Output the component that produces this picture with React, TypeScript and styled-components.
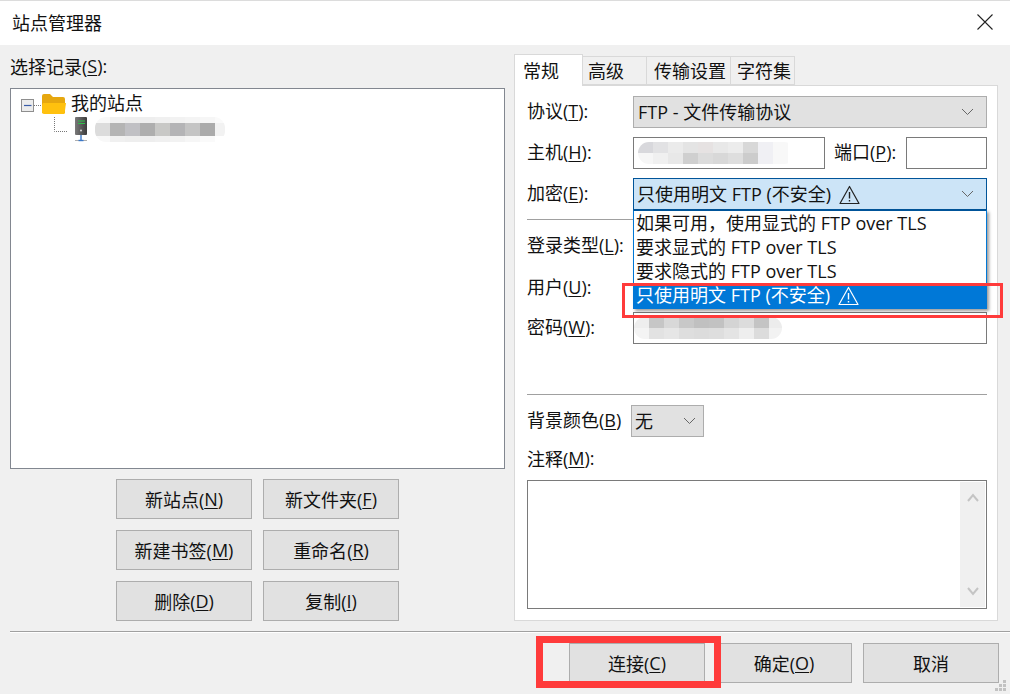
import React from "react";
import styled, { createGlobalStyle } from "styled-components";

const GlobalStyle = createGlobalStyle`
  html, body {
    margin: 0;
    padding: 0;
    background: #f0f0f0;
  }
  * {
    box-sizing: border-box;
  }
`;

const Chevron = ({ size = 13 }: { size?: number }) => (
  <svg width={size} height={8} viewBox="0 0 13 8" fill="none">
    <path d="M1 1l5.5 5.5L12 1" stroke="#666" strokeWidth="1" />
  </svg>
);

const Warn = ({ color }: { color: string }) => (
  <WarnIcon width="21" height="20" viewBox="0 0 21 20" fill="none">
    <path d="M10.5 1.5L20 18.5H1z" stroke={color} strokeWidth="1.2" strokeLinejoin="round" />
    <path d="M10.5 7v6.5M10.5 15v1.6" stroke={color} strokeWidth="1.4" />
  </WarnIcon>
);

type SmudgeProps = { rows: string[][]; cell: number; width: number; height: number };

// the blurred out host names in the picture
const Smudge = ({ rows, cell, width, height }: SmudgeProps) => (
  <SmudgeBox $width={width} $height={height}>
    {rows.map((row, i) => (
      <SmudgeRow key={i}>
        {row.map((c, j) => (
          <SmudgeCell key={j} $w={cell} $c={c} />
        ))}
      </SmudgeRow>
    ))}
  </SmudgeBox>
);

const Key = ({ label, k, tail = "" }: { label: string; k: string; tail?: string }) => (
  <>
    {label}(<u>{k}</u>){tail}
  </>
);

const App = () => {
  return (
    <Window>
      <GlobalStyle />
      <TitleBar>
        <span>站点管理器</span>
        <svg width="16" height="16" viewBox="0 0 16 16" fill="none">
          <path d="M.5.5l15 15M15.5.5l-15 15" stroke="#222" strokeWidth="1.1" />
        </svg>
      </TitleBar>

      <Main>
        <LeftPane>
          <LeftLabel>
            <Key label="选择记录" k="S" tail=":" />
          </LeftLabel>
          <Tree>
            <TreeRow>
              <svg width="50" height="24" viewBox="0 0 50 24" fill="none">
                <rect x=".5" y="7.5" width="12" height="12" fill="#ececec" stroke="#8e8e8e" />
                <path d="M3 13.5h7.5" stroke="#3a5ca8" strokeWidth="1.2" />
                <path d="M13 13.5h8" stroke="#777" strokeDasharray="1 1" />
                <path d="M21 4a2 2 0 012-2h6l3 3h10a2 2 0 012 2v14H21z" fill="#e6a70f" />
                <path d="M21 13l1-2h23l-1.5 11H23a2 2 0 01-2-2z" fill="#ffc10e" />
              </svg>
              <span>我的站点</span>
            </TreeRow>
            <TreeRow>
              <svg width="74" height="25" viewBox="0 0 74 25" fill="none">
                <defs>
                  <linearGradient id="serverBody" x1="0" y1="0" x2="1" y2="0">
                    <stop offset="0" stopColor="#7a7a7a" />
                    <stop offset="1" stopColor="#3c3c3c" />
                  </linearGradient>
                </defs>
                <rect x="54" y="0" width="12" height="18" rx="1" fill="url(#serverBody)" />
                <path d="M33.5 0v14.5H47" stroke="#777" strokeDasharray="1 1" />
                <path d="M57 4h7M57 6.5h7" stroke="#2fc04a" />
                <circle cx="60" cy="13.5" r="1" fill="#ddd" />
                <path d="M60 18v5" stroke="#3a78c8" strokeWidth="1.4" />
                <path d="M54 23.5h12" stroke="#b0b0b0" />
                <path d="M57.5 23.5h5" stroke="#3a78c8" strokeWidth="1.4" />
              </svg>
              <Smudge
                width={130}
                height={25}
                cell={15}
                rows={[
                  ["#f8f8f8", "#f0f0f0", "#eeeeee", "#eeeeee", "#f0f0f0", "#f2f2f2", "#f4f4f4", "#f6f6f6", "#fafafa"],
                  ["#dcdcdc", "#b4b4b4", "#c0c0c4", "#aeaeae", "#c8c8c6", "#b4b4b6", "#c4c4c4", "#ababab", "#f2f2f2"],
                  ["#dcdcdc", "#b4b4b4", "#c0c0c4", "#aeaeae", "#c8c8c6", "#b4b4b6", "#c4c4c4", "#ababab", "#f2f2f2"],
                  ["#f8f8f8", "#f0f0f0", "#eeeeee", "#eeeeee", "#f0f0f0", "#f2f2f2", "#f6f6f6", "#fafafa", "#ffffff"],
                ]}
              />
            </TreeRow>
          </Tree>
          <SiteButtons>
            <Button>
              <Key label="新站点" k="N" />
            </Button>
            <Button>
              <Key label="新文件夹" k="F" />
            </Button>
            <Button>
              <Key label="新建书签" k="M" />
            </Button>
            <Button>
              <Key label="重命名" k="R" />
            </Button>
            <Button>
              <Key label="删除" k="D" />
            </Button>
            <Button>
              <Key label="复制" k="I" />
            </Button>
          </SiteButtons>
        </LeftPane>

        <RightPane>
          <Tabs>
            <Tab $active $w={69} $pad={8}>常规</Tab>
            <Tab $w={64} $pad={5}>高级</Tab>
            <Tab $w={84} $pad={7}>传输设置</Tab>
            <Tab $w={64} $pad={6}>字符集</Tab>
          </Tabs>
          <Panel>
            <Row>
              <FieldLabel>
                <Key label="协议" k="T" tail=":" />
              </FieldLabel>
              <Select>
                <span>FTP - 文件传输协议</span>
                <Chevron />
              </Select>
            </Row>
            <Row>
              <FieldLabel>
                <Key label="主机" k="H" tail=":" />
              </FieldLabel>
              <Input $w={192} $pad={4}>
                <Smudge
                  width={157}
                  height={22}
                  cell={15}
                  rows={[
                    ["#d8d8dc", "#e2e2e4", "#ebebeb", "#e4e4e4", "#e6e2e2", "#e8e8e8", "#ececec", "#d8d8d8", "#f0f0f4", "#f8f8f8", "#ffffff"],
                    ["#f6f6f6", "#f0f0f0", "#e8e8e8", "#cfcfcf", "#dcdcdc", "#d8d8d8", "#dedede", "#cccccc", "#f0f0f4", "#f8f8f8", "#ffffff"],
                  ]}
                />
              </Input>
              <PortLabel>
                <Key label="端口" k="P" tail=":" />
              </PortLabel>
              <Input $w={81} />
            </Row>
            <Row>
              <FieldLabel>
                <Key label="加密" k="E" tail=":" />
              </FieldLabel>
              <OpenSelect>
                <span>
                  只使用明文 FTP (不安全)
                  <Warn color="#222" />
                </span>
                <Chevron />
                <Dropdown>
                  <Option>如果可用，使用显式的 FTP over TLS</Option>
                  <Option>要求显式的 FTP over TLS</Option>
                  <Option>要求隐式的 FTP over TLS</Option>
                  <Option $active>
                    只使用明文 FTP (不安全)
                    <Warn color="#fff" />
                  </Option>
                </Dropdown>
              </OpenSelect>
            </Row>
            <Rule />
            <Row>
              <FieldLabel $lift={3}>
                <Key label="登录类型" k="L" tail=":" />
              </FieldLabel>
              <Select />
            </Row>
            <Row>
              <FieldLabel $lift={1}>
                <Key label="用户" k="U" tail=":" />
              </FieldLabel>
              <Input $w={354} />
            </Row>
            <Row $gap={10}>
              <FieldLabel>
                <Key label="密码" k="W" tail=":" />
              </FieldLabel>
              <Input $w={354} $pad={0}>
                <Smudge
                  width={148}
                  height={22}
                  cell={15}
                  rows={[
                    ["#eeeeee", "#c6c6c6", "#d8d8d8", "#c8c8c8", "#c0c0c0", "#c2c2c2", "#d4d4d4", "#dcdcdc", "#c4c4c4", "#ececec"],
                    ["#f4f4f4", "#e2e2e2", "#e6e6e6", "#dedede", "#dcdcdc", "#dedede", "#e4e4e4", "#eeeeee", "#dcdcdc", "#f2f2f2"],
                  ]}
                />
              </Input>
            </Row>
            <Rule $top={50} />
            <Row $gap={10}>
              <ColorLabel>
                <Key label="背景颜色" k="B" />
              </ColorLabel>
              <SmallSelect>
                <span>无</span>
                <Chevron />
              </SmallSelect>
            </Row>
            <NoteLabel>
              <Key label="注释" k="M" tail=":" />
            </NoteLabel>
            <NoteBox>
              <ScrollBar>
                <svg width="12" height="9" viewBox="0 0 12 9" fill="none">
                  <path d="M1 8l5-6 5 6" stroke="#c4c4c4" strokeWidth="2" />
                </svg>
                <svg width="12" height="9" viewBox="0 0 12 9" fill="none">
                  <path d="M1 1l5 6 5-6" stroke="#c4c4c4" strokeWidth="2" />
                </svg>
              </ScrollBar>
            </NoteBox>
          </Panel>
        </RightPane>
      </Main>

      <Footer>
        <FooterButtons>
          <Button>
            <Key label="连接" k="C" />
          </Button>
          <Button>
            <Key label="确定" k="O" />
          </Button>
          <Button>取消</Button>
        </FooterButtons>
      </Footer>

      <Grip width="11" height="11" viewBox="0 0 11 11" fill="#c2c2c2">
        <rect x="8" y="0" width="3" height="3" />
        <rect x="4" y="4" width="3" height="3" />
        <rect x="8" y="4" width="3" height="3" />
        <rect x="0" y="8" width="3" height="3" />
        <rect x="4" y="8" width="3" height="3" />
        <rect x="8" y="8" width="3" height="3" />
      </Grip>

      {/* red marks drawn over the screenshot */}
      <RedMark $x={622} $y={283} $w={381} $h={35} $t={3} />
      <RedMark $x={536} $y={636} $w={185} $h={52} $t={7} />
    </Window>
  );
};

export default App;

const Window = styled.div`
  position: relative;
  width: 1010px;
  height: 694px;
  overflow: hidden;
  display: flex;
  flex-direction: column;
  background: #f0f0f0;
  color: #111;
  font-family: "Open Sans", "Noto Sans CJK SC", sans-serif;
  font-size: 18px;
  u {
    text-underline-offset: 2px;
    text-decoration-thickness: 1px;
  }
`;

const TitleBar = styled.div`
  height: 45px;
  flex: none;
  display: flex;
  align-items: center;
  justify-content: space-between;
  padding: 0 17px 2px 12px;
  background: #fff;
  border-top: 1px solid #dcdcdc;
`;

const Main = styled.div`
  flex: none;
  height: 586px;
  display: flex;
`;

const LeftPane = styled.div`
  width: 505px;
  padding-left: 10px;
`;

const LeftLabel = styled.div`
  height: 43px;
  display: flex;
  align-items: center;
  padding-bottom: 2px;
  white-space: pre;
`;

const Tree = styled.div`
  height: 381px;
  padding: 3px 0 0 10px;
  background: #fff;
  border: 1px solid #828790;
`;

const TreeRow = styled.div`
  display: flex;
  align-items: center;
  height: 24px;
  & + & {
    height: 25px;
    margin-top: 1px;
  }
  svg {
    flex: none;
  }
  span {
    margin-top: -4px;
  }
`;

const SmudgeBox = styled.div<{ $width: number; $height: number }>`
  width: ${({ $width }) => $width}px;
  height: ${({ $height }) => $height}px;
  display: flex;
  flex-direction: column;
  overflow: hidden;
  border-radius: 11px;
  filter: blur(0.7px);
`;

const SmudgeRow = styled.div`
  flex: 1;
  display: flex;
`;

const SmudgeCell = styled.div<{ $w: number; $c: string }>`
  flex: none;
  width: ${({ $w }) => $w}px;
  background: ${({ $c }) => $c};
`;

const SiteButtons = styled.div`
  display: grid;
  grid-template-columns: 136px 136px;
  grid-auto-rows: 40px;
  gap: 11px;
  justify-content: center;
  margin-top: 10px;
`;

const Button = styled.div`
  width: 136px;
  height: 40px;
  display: flex;
  align-items: center;
  justify-content: center;
  padding-bottom: 1px;
  white-space: pre;
  background: #e1e1e1;
  border: 1px solid #adadad;
`;

const RightPane = styled.div`
  width: 484px;
  margin-left: 9px;
  padding-top: 9px;
`;

const Tabs = styled.div`
  height: 31px;
  display: flex;
  align-items: flex-end;
  position: relative;
  z-index: 1;
`;

const Tab = styled.div<{ $active?: boolean; $w: number; $pad: number }>`
  width: ${({ $w }) => $w}px;
  height: ${({ $active }) => ($active ? 32 : 29)}px;
  margin-bottom: ${({ $active }) => ($active ? -1 : 0)}px;
  display: flex;
  align-items: center;
  padding: 0 0 2px ${({ $pad }) => $pad}px;
  background: ${({ $active }) => ($active ? "#fff" : "#f0f0f0")};
  border: 1px solid #d9d9d9;
  border-left-width: ${({ $active }) => ($active ? 1 : 0)}px;
  border-bottom-width: ${({ $active }) => ($active ? 0 : 1)}px;
  white-space: nowrap;
`;

const Panel = styled.div`
  height: 536px;
  padding: 10px 10px 0 12px;
  background: #fff;
  border: 1px solid #d9d9d9;
`;

const Row = styled.div<{ $gap?: number }>`
  height: 32px;
  display: flex;
  align-items: center;
  margin-top: ${({ $gap }) => $gap ?? 9}px;
  &:first-child {
    margin-top: 0;
  }
`;

const FieldLabel = styled.div<{ $lift?: number }>`
  width: 106px;
  flex: none;
  margin-top: -${({ $lift }) => $lift ?? 4}px;
  white-space: pre;
`;

const ColorLabel = styled(FieldLabel)`
  width: 104px;
`;

const PortLabel = styled.div`
  width: 81px;
  margin-top: -4px;
  padding-left: 9px;
  white-space: pre;
`;

const Input = styled.div<{ $w: number; $pad?: number }>`
  width: ${({ $w }) => $w}px;
  height: 32px;
  flex: none;
  display: flex;
  align-items: center;
  padding-left: ${({ $pad }) => $pad ?? 0}px;
  background: #fff;
  border: 1px solid #7a7a7a;
`;

const Select = styled.div`
  width: 354px;
  height: 32px;
  flex: none;
  display: flex;
  align-items: center;
  justify-content: space-between;
  padding: 0 12px 0 4px;
  background: #e1e1e1;
  border: 1px solid #adadad;
  span {
    margin-top: -3px;
  }
`;

const OpenSelect = styled(Select)`
  position: relative;
  padding-left: 3px;
  background: #cce4f7;
  border-color: #005499;
`;

const SmallSelect = styled(Select)`
  width: 73px;
  padding: 0 7px 0 3px;
`;

const WarnIcon = styled.svg`
  margin-left: 8px;
  vertical-align: -4px;
`;

const Dropdown = styled.div`
  position: absolute;
  top: 31px;
  left: -1px;
  width: 354px;
  z-index: 2;
  padding-top: 1px;
  background: #fff;
  border: 1px solid #0078d7;
  border-top-color: #005499;
  box-shadow: 2px 2px 3px rgba(0, 0, 0, 0.4);
`;

const Option = styled.div<{ $active?: boolean }>`
  height: 24px;
  line-height: 22px;
  padding-left: 2px;
  white-space: pre;
  background: ${({ $active }) => ($active ? "#0078d7" : "transparent")};
  color: ${({ $active }) => ($active ? "#fff" : "#111")};
`;

const Rule = styled.div<{ $top?: number }>`
  height: 1px;
  margin: ${({ $top }) => $top ?? 9}px 0 0;
  background: #a0a0a0;
  & + ${Row} {
    margin-top: ${({ $top }) => ($top ? 10 : 9)}px;
  }
`;

const NoteLabel = styled.div`
  height: 22px;
  margin-top: 10px;
  display: flex;
  align-items: center;
  white-space: pre;
`;

const NoteBox = styled.div`
  width: 460px;
  height: 129px;
  margin-top: 11px;
  display: flex;
  justify-content: flex-end;
  padding: 1px;
  background: #fff;
  border: 1px solid #7a7a7a;
`;

const ScrollBar = styled.div`
  width: 25px;
  display: flex;
  flex-direction: column;
  align-items: center;
  justify-content: space-between;
  padding: 11px 0;
  background: #f0f0f0;
`;

const Footer = styled.div`
  flex: none;
  margin-left: 10px;
  border-top: 1px solid #a0a0a0;
  box-shadow: inset 0 1px 0 #fff;
  padding: 11px 11px 0 0;
`;

const FooterButtons = styled.div`
  display: flex;
  justify-content: flex-end;
  gap: 11px;
`;

const Grip = styled.svg`
  position: absolute;
  right: 4px;
  bottom: 3px;
`;

const RedMark = styled.div<{ $x: number; $y: number; $w: number; $h: number; $t: number }>`
  position: absolute;
  left: ${({ $x }) => $x}px;
  top: ${({ $y }) => $y}px;
  width: ${({ $w }) => $w}px;
  height: ${({ $h }) => $h}px;
  border: ${({ $t }) => $t}px solid #ff3b3b;
  z-index: 3;
`;
